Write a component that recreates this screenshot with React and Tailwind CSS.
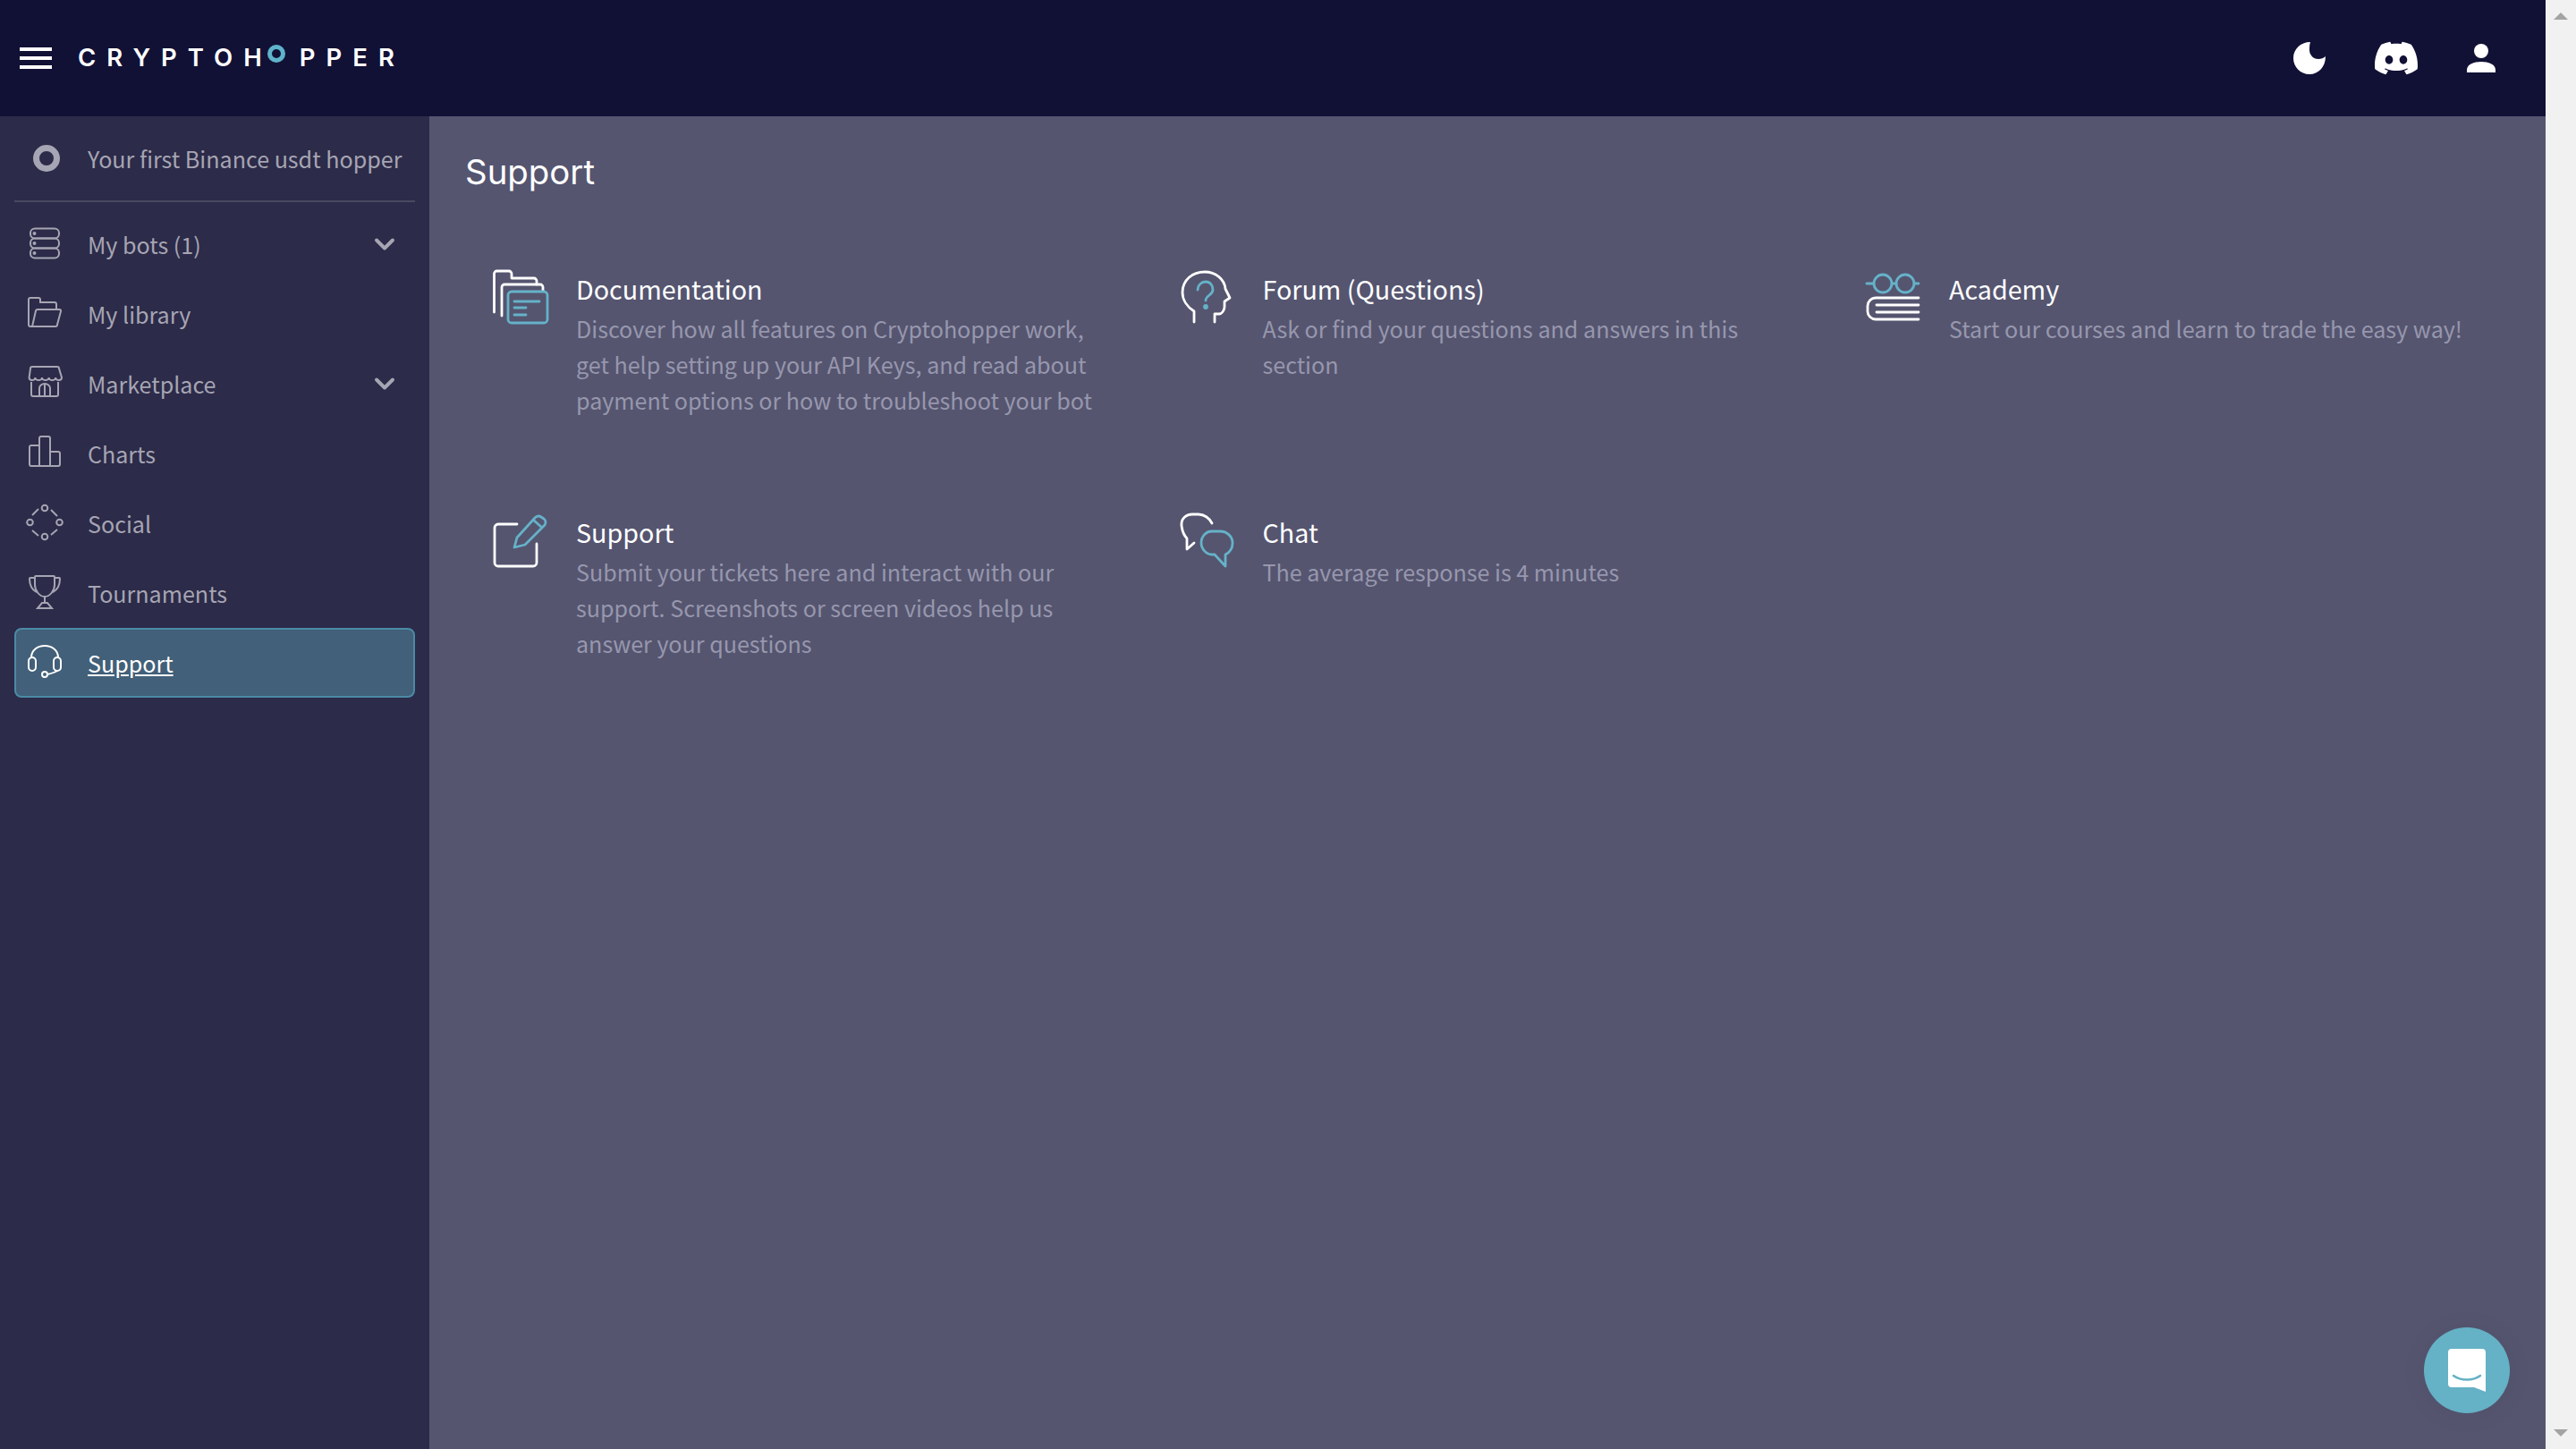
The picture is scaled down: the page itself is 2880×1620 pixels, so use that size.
import React from 'react';
import { ChevronDown } from 'lucide-react';
import { SiDiscord } from 'react-icons/si';

const BLUE = '#66b2c8';

const BOTS = (
  <>
    <rect x="4" y="2.500" width="32" height="11" rx="5" />
    <rect x="4" y="13.500" width="32" height="11" rx="5" />
    <rect x="4" y="24.500" width="32" height="11" rx="5" />
    <circle cx="8.500" cy="8" r="1" />
    <circle cx="8.500" cy="19" r="1" />
    <circle cx="8.500" cy="30" r="1" />
  </>
);

const LIBRARY = (
  <path d="M33 15V9a2 2 0 0 0-2-2H15V4a2 2 0 0 0-2-2H4a2 2 0 0 0-2 2v28a2 2 0 0 0 2 2h28a2 2 0 0 0 2-2l4-15a1.500 1.500 0 0 0-1.500-2H12a2 2 0 0 0-2 1.500L6 34" />
);

const MARKET = (
  <>
    <path d="M6 1h28a2 2 0 0 1 2 2l3 10a3 3 0 0 1-3 3c-2 0-3.800-1-3.800-3a3.800 3 0 0 1-7.600 0 3.800 3 0 0 1-7.600 0 3.800 3 0 0 1-7.600 0c0 2-1.800 3-3.800 3a3 3 0 0 1-3-3L4 3a2 2 0 0 1 2-2z" />
    <path d="M5 18v14a2 2 0 0 0 2 2h26a2 2 0 0 0 2-2V18" />
    <path d="M14 34V25a6 5 0 0 1 12 0v9M20 20v14" />
  </>
);

const CHARTS = (
  <path d="M14 34V3a2 2 0 0 1 2-2h8a2 2 0 0 1 2 2v31M14 11H5a2 2 0 0 0-2 2v19a2 2 0 0 0 2 2h30a2 2 0 0 0 2-2V20a2 2 0 0 0-2-2h-9" />
);

const SOCIAL = (
  <>
    <circle cx="20" cy="3" r="3.300" />
    <circle cx="20" cy="35" r="3.300" />
    <circle cx="3.500" cy="19" r="3.300" />
    <circle cx="36.500" cy="19" r="3.300" />
    <path d="M6 11l7-7M27 5l7 7M6 28l7 6M27 33l7-6" />
  </>
);

const TROPHY = (
  <>
    <path d="M10 1h20a1 1 0 0 1 1 1v9c0 6-5 13-11 13S9 17 9 11V2a1 1 0 0 1 1-1z" />
    <path d="M9 3H4a1 1 0 0 0-1 1c0 8 4 13 8 15M31 3h5a1 1 0 0 1 1 1c0 8-4 13-8 15" />
    <path d="M20 24v7M17 31h6l5 6H12l5-6z" />
  </>
);

const HEADSET = (
  <>
    <path d="M5 14C5 6 12 1 20 1s15 5 15 13" />
    <rect x="2" y="14" width="8" height="15" rx="4" />
    <rect x="30" y="14" width="8" height="15" rx="4" />
    <path d="M23 33c4-1 8-2 11-4" />
    <circle cx="20" cy="33" r="3" />
  </>
);

const NAV = [
  { label: 'My bots (1)', icon: BOTS, arrow: true },
  { label: 'My library', icon: LIBRARY },
  { label: 'Marketplace', icon: MARKET, arrow: true },
  { label: 'Charts', icon: CHARTS },
  { label: 'Social', icon: SOCIAL },
  { label: 'Tournaments', icon: TROPHY },
  { label: 'Support', icon: HEADSET, active: true },
];

const CARDS = [
  {
    id: 'docs',
    title: 'Documentation',
    text: 'Discover how all features on Cryptohopper work, get help setting up your API Keys, and read about payment options or how to troubleshoot your bot',
    icon: (
      <>
        <path d="M1.500 47V4a3 3 0 0 1 3-3H18a3 3 0 0 1 3 3v5h25a3 3 0 0 1 3 3v4" stroke="#fff" />
        <path d="M10 51V19a3 3 0 0 1 3-3h40a3 3 0 0 1 3 3v5" stroke="#fff" />
        <rect x="17" y="24" width="44" height="35" rx="4" fill="#555570" stroke={BLUE} />
        <path d="M24 35h28M24 42h13M24 50h13" stroke={BLUE} />
      </>
    ),
  },
  {
    id: 'forum',
    title: 'Forum (Questions)',
    text: 'Ask or find your questions and answers in this section',
    icon: (
      <>
        <path d="M16 58V46C8 41 3 33 3 25 3 11 14 2 28 2c12 0 22 8 23 19l5 10-6 4v6c0 4-3 8-6 8h-5v9" stroke="#fff" />
        <path d="M20 22c0-5 4-9 9-9s8 4 8 9c0 6-8 6-8 12" stroke={BLUE} />
        <circle cx="29" cy="41" r="1.500" fill={BLUE} stroke={BLUE} />
      </>
    ),
  },
  {
    id: 'academy',
    title: 'Academy',
    text: 'Start our courses and learn to trade the easy way!',
    icon: (
      <>
        <circle cx="19" cy="15" r="10" stroke={BLUE} />
        <circle cx="44" cy="15" r="10" stroke={BLUE} />
        <path d="M1 15h8M29 15h5M54 15h5" stroke={BLUE} />
        <path d="M59 31H11a9 9 0 0 0-9 9v6a9 9 0 0 0 9 9h48M12 39h47M12 47h47" stroke="#fff" />
      </>
    ),
  },
  {
    id: 'support',
    title: 'Support',
    text: 'Submit your tickets here and interact with our support. Screenshots or screen videos help us answer your questions',
    icon: (
      <>
        <path d="M27 12H6a4 4 0 0 0-4 4v39a4 4 0 0 0 4 4h39a4 4 0 0 0 4-4V34" stroke="#fff" />
        <path d="M24 38l3-11L47 5a5 5 0 0 1 7-1l3 2a5 5 0 0 1 1 7L36 35zM45 7l9 8" stroke={BLUE} />
      </>
    ),
  },
  {
    id: 'chat',
    title: 'Chat',
    text: 'The average response is 4 minutes',
    icon: (
      <>
        <path d="M36 11C33 5 27 1 21 1h-7C7 1 1 6 2 14c1 7 3 11 6 14v12l8-7" stroke="#fff" />
        <path d="M36 20h9c8 0 14 6 14 13s-4 11-8 13v13L39 46h-3c-6 0-12-6-12-13s5-13 12-13z" stroke={BLUE} />
      </>
    ),
  },
];

function NavRow({ item }) {
  return (
    <div
      className={`flex h-[78px] items-center pl-[12px] ${
        item.active
          ? 'rounded-[8px] border-2 border-[#4b8ba6] bg-[#426079] text-white underline'
          : 'border-2 border-transparent text-[#a6a5b3]'
      }`}
    >
      <div className="w-[68px] shrink-0">
        <svg viewBox="0 0 40 40" fill="none" stroke="currentColor" strokeWidth="2" className="h-[40px] w-[40px] overflow-visible">
          {item.icon}
        </svg>
      </div>
      <span className="flex-1">{item.label}</span>
      {item.arrow && <ChevronDown className="mr-[14px] h-[36px] w-[36px]" strokeWidth={2.6} />}
    </div>
  );
}

function Card({ card }) {
  return (
    <div className="flex">
      <div className="w-[124px] shrink-0 pl-[31px] pt-[3px]">
        <svg viewBox="0 0 62 62" fill="none" strokeWidth="2.800" strokeLinecap="round" strokeLinejoin="round" className="h-[62px] w-[62px] overflow-visible">
          {card.icon}
        </svg>
      </div>
      <div className="w-[590px]">
        <div className="text-[28.7px] leading-[48px] text-white">{card.title}</div>
        <div className="text-[#9797ad]">{card.text}</div>
      </div>
    </div>
  );
}

export default function App() {
  return (
    <div className="flex h-[1620px] w-full overflow-hidden font-['Noto_Sans_CJK_JP','Noto_Sans',sans-serif] text-[25.08px] leading-[40px]">
      <div className="relative flex min-w-0 flex-1 flex-col">
        <header className="flex h-[130px] shrink-0 items-center bg-[#111136] pl-[22px] pr-[56px]">
          <div className="flex w-[36px] flex-col gap-[6px]">
            <div className="h-[4px] bg-white" />
            <div className="h-[4px] bg-white" />
            <div className="h-[4px] bg-white" />
          </div>
          <div className="ml-[29px] flex h-[30px] items-center font-['Inter',sans-serif] text-[27.5px] font-semibold leading-none tracking-[12px] text-white">
            <span>CRYPTOH</span>
            <span className="relative -top-[5px] -ml-[6px] mr-[16px] h-[20px] w-[20px] rounded-full border-[5px] border-[#5fb3cb]" />
            <span>PPER</span>
          </div>
          <div className="ml-auto flex items-center gap-[55px] text-white">
            <svg viewBox="0 0 36 36" className="h-[36px] w-[36px]" fill="currentColor">
              <path d="M19 0C8 0 0 8 0 18s8 18 18 18 18-8 18-20c-2 2-5 3-8 3-6 0-10-5-10-10 0-3 0-6 1-9z" />
            </svg>
            <SiDiscord className="h-[48px] w-[48px]" />
            <svg viewBox="0 0 32 32" className="h-[32px] w-[32px]" fill="currentColor">
              <circle cx="16" cy="8" r="8" />
              <path d="M0 32v-3c0-6 8-9 16-9s16 3 16 9v3z" />
            </svg>
          </div>
        </header>
        <div className="flex min-h-0 flex-1">
          <aside className="w-[480px] shrink-0 bg-[#2c2b49] px-[16px]">
            <div className="flex h-[96px] items-center whitespace-nowrap border-b-2 border-[#4a4961] text-[#a6a5b3]">
              <div className="ml-[21px] h-[30px] w-[30px] rounded-full border-[7px] border-[#a6a5b3]" />
              <span className="ml-[31px]">Your first Binance usdt hopper</span>
            </div>
            <nav className="mt-[8px]">
              {NAV.map((item) => (
                <NavRow key={item.label} item={item} />
              ))}
            </nav>
          </aside>
          <main className="flex-1 bg-[#555570] pl-[40px] pr-[20px] pt-[40px]">
            <h1 className="font-['Inter',sans-serif] text-[38.4px] font-normal leading-[44px] text-white">Support</h1>
            <div className="mt-[85px] grid grid-cols-[767.5px_767.5px_1fr] gap-y-[104px]">
              {CARDS.map((card) => (
                <Card key={card.id} card={card} />
              ))}
            </div>
          </main>
        </div>
        <div className="absolute bottom-[40px] right-[40px] flex h-[96px] w-[96px] items-center justify-center rounded-full bg-[#65b1c6] shadow-[0_2px_30px_rgba(0,0,0,0.06)]">
          <svg viewBox="0 0 42 48" className="h-[48px] w-[42px]">
            <path d="M4 0h34a4 4 0 0 1 4 4v44l-13-5H4a4 4 0 0 1-4-4V4a4 4 0 0 1 4-4z" fill="#fff" />
            <path d="M6 30c8 6 22 6 30 0" fill="none" stroke="#65b1c6" strokeWidth="2.500" strokeLinecap="round" />
          </svg>
        </div>
      </div>
      <div className="flex w-[34px] shrink-0 flex-col items-center justify-between bg-[#f1f1f1] py-[14px]">
        <svg viewBox="0 0 16 8" className="h-[8px] w-[16px]" fill="#a3a3a3"><path d="M8 0l8 8H0z" /></svg>
        <svg viewBox="0 0 16 8" className="h-[8px] w-[16px]" fill="#a3a3a3"><path d="M8 8L0 0h16z" /></svg>
      </div>
    </div>
  );
}
